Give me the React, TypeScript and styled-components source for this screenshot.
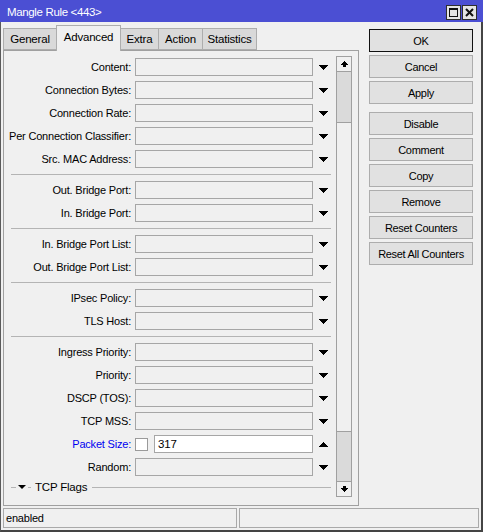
import React from 'react';
import styled, { createGlobalStyle } from 'styled-components';

const Global = createGlobalStyle`
  html, body { margin: 0; padding: 0; background: #f0f0f0; }
  body {
    font-family: "Liberation Sans", Arial, sans-serif;
    font-size: 11px;
    letter-spacing: -0.2px;
    color: #000;
  }
  * { box-sizing: border-box; }
`;

const Frame = styled.div`
  width: 483px;
  height: 532px;
  display: flex;
  flex-direction: column;
  background: #f0f0f0;
  overflow: hidden;
`;

const TitleBar = styled.div`
  height: 22px;
  flex: none;
  background: #4b4fd3;
  display: flex;
  align-items: center;
  padding: 1px 6px 0 7px;
  color: #fff;
  font-size: 11.5px;
  letter-spacing: -0.35px;
`;

const Title = styled.div`
  flex: 1;
  padding-top: 1px;
`;

const TitleButtons = styled.div`
  display: flex;
  gap: 1px;
  margin-top: 2px;
`;

const TitleBtn = styled.div`
  width: 15px;
  height: 15px;
  background: #e4e4e4;
  border: 1px solid #2e2e2e;
  display: flex;
  align-items: center;
  justify-content: center;
`;

const Client = styled.div`
  flex: 1;
  display: flex;
  flex-direction: column;
  border-left: 1px solid #5a5a5a;
  border-right: 2px solid #444;
  border-bottom: 2px solid #444;
  padding: 3px 2px 2px 2px;
`;

const MainRow = styled.div`
  display: flex;
  gap: 10px;
  height: 481px;
`;

const LeftCol = styled.div`
  width: 356px;
  display: flex;
  flex-direction: column;
`;

const TabStrip = styled.div`
  height: 25px;
  display: flex;
  align-items: flex-end;
  position: relative;
  z-index: 2;
`;

const Tab = styled.div<{ $w: number; $active?: boolean }>`
  width: ${p => p.$w}px;
  height: ${p => (p.$active ? 26 : 22)}px;
  margin-right: -1px;
  margin-bottom: ${p => (p.$active ? -1 : 0)}px;
  background: ${p => (p.$active ? '#f0f0f0' : '#d9d9d9')};
  border: 1px solid #adadad;
  border-bottom: ${p => (p.$active ? 'none' : '1px solid #adadad')};
  display: flex;
  align-items: center;
  justify-content: center;
  padding-bottom: ${p => (p.$active ? 3 : 0)}px;
  position: relative;
  z-index: ${p => (p.$active ? 2 : 1)};
  font-size: 11.5px;
`;

const Panel = styled.div`
  height: 456px;
  border: 1px solid #a0a0a0;
  background: #f0f0f0;
  display: flex;
  padding: 5px 6px 8px 0;
`;

const Viewport = styled.div`
  width: 332px;
  height: 441px;
  overflow: hidden;
  display: flex;
  flex-direction: column;
  padding-top: 2px;
`;

const Row = styled.div`
  display: grid;
  grid-template-columns: 131px 178px 20px;
  height: 18px;
  margin-bottom: 5px;
  flex: none;
  align-items: center;
`;

const Label = styled.div<{ $blue?: boolean }>`
  text-align: right;
  white-space: nowrap;
  padding-right: 4px;
  color: ${p => (p.$blue ? '#0000f0' : '#000')};
  line-height: 18px;
`;

const Field = styled.div<{ $white?: boolean }>`
  height: 18px;
  flex: 1;
  border: 1px solid #a6a6a6;
  background: ${p => (p.$white ? '#fff' : '#f0f0f0')};
  padding: 0 3px;
  line-height: 16px;
  font-size: 11.5px;
`;

const FieldGroup = styled.div`
  display: flex;
  align-items: center;
  height: 18px;
`;

const Check = styled.div`
  width: 13px;
  height: 13px;
  border: 1px solid #9a9a9a;
  background: #fff;
  margin-right: 6px;
  flex: none;
`;

const ArrowCell = styled.div`
  display: flex;
  justify-content: center;
  align-items: center;
  height: 18px;
`;

const Separator = styled.div`
  height: 1px;
  background: #b4b4b4;
  margin: 1px 5px 6px 7px;
  flex: none;
`;

const GroupHeader = styled.div`
  height: 12px;
  display: flex;
  align-items: center;
  margin: 0 5px 0 7px;
  flex: none;
`;

const Line = styled.div<{ $w?: number }>`
  height: 1px;
  background: #b4b4b4;
  ${p => (p.$w ? `width: ${p.$w}px; flex: none;` : 'flex: 1;')}
`;

const Spacer = styled.span<{ $w: number }>`
  width: ${p => p.$w}px;
  flex: none;
`;

const GroupTitle = styled.span`
  margin: 0 5px 0 4px;
  white-space: nowrap;
  font-size: 11.5px;
`;

const Scrollbar = styled.div`
  width: 16px;
  height: 441px;
  display: flex;
  flex-direction: column;
  flex: none;
`;

const ScrollBtn = styled.div`
  height: 16px;
  flex: none;
  border: 1px solid #a0a0a0;
  background: #f0f0f0;
  display: flex;
  align-items: center;
  justify-content: center;
`;

const Track = styled.div`
  flex: 1;
  background: #dadada;
  border-left: 1px solid #a0a0a0;
  border-right: 1px solid #a0a0a0;
  display: flex;
  flex-direction: column;
  margin-bottom: -1px;
`;

const Thumb = styled.div`
  background: #f0f0f0;
  border: 1px solid #a0a0a0;
  margin: 0 -1px;
  flex: none;
`;

const RightCol = styled.div`
  width: 104px;
  margin-top: 4px;
  display: flex;
  flex-direction: column;
`;

const Button = styled.div<{ $default?: boolean; $gapAfter?: boolean }>`
  height: 23px;
  margin-bottom: ${p => (p.$gapAfter ? 8 : 3)}px;
  background: #e1e1e1;
  border: 1px solid ${p => (p.$default ? '#111' : '#adadad')};
  display: flex;
  align-items: center;
  justify-content: center;
  white-space: nowrap;
  font-size: 11px;
  letter-spacing: -0.3px;
`;

const StatusBar = styled.div`
  margin-top: 2px;
  height: 20px;
  display: flex;
  gap: 2px;
`;

const StatusCell = styled.div<{ $w?: number }>`
  ${p => (p.$w ? `width: ${p.$w}px;` : 'flex: 1;')}
  height: 20px;
  border: 1px solid #a9a9a9;
  padding: 0 2px;
  line-height: 18px;
  font-size: 11px;
`;

const DownTri = () => (
  <svg width="9" height="5" viewBox="0 0 9 5" shapeRendering="crispEdges">
    <path d="M0 0h9v1h-1v1h-1v1h-1v1h-1v1h-1v-1h-1v-1h-1v-1h-1v-1h-1z" fill="#000" />
  </svg>
);

const UpTri = () => (
  <svg width="9" height="5" viewBox="0 0 9 5" shapeRendering="crispEdges">
    <path d="M0 5h9v-1h-1v-1h-1v-1h-1v-1h-1v-1h-1v1h-1v1h-1v1h-1v1h-1z" fill="#000" />
  </svg>
);

const SmallDownTri = () => (
  <svg width="8" height="4" viewBox="0 0 8 4">
    <path d="M0 0H8L4 4Z" fill="#000" />
  </svg>
);

const ScrollUpIcon = () => (
  <svg width="7" height="6" viewBox="0 0 7 6" shapeRendering="crispEdges">
    <path d="M3 0h1v1h1v1h1v1h1v1h-2v2h-3v-2h-2v-1h1v-1h1v-1h1z" fill="#000" />
  </svg>
);

const ScrollDownIcon = () => (
  <svg width="7" height="6" viewBox="0 0 7 6" shapeRendering="crispEdges">
    <path d="M2 0h3v2h2v1h-1v1h-1v1h-1v1h-1v-1h-1v-1h-1v-1h-1v-1h2z" fill="#000" />
  </svg>
);

const MaxIcon = () => (
  <svg width="9" height="9" viewBox="0 0 9 9" shapeRendering="crispEdges">
    <path d="M0 0h9v9h-9z M1 2v6h7v-6z" fill="#111" fillRule="evenodd" />
  </svg>
);

const CloseIcon = () => (
  <svg width="9" height="9" viewBox="0 0 9 9">
    <path d="M1 1L8 8M8 1L1 8" stroke="#111" strokeWidth="2" />
  </svg>
);

type FieldDef = { label: string; special?: 'packet' };

const sections: FieldDef[][] = [
  [
    { label: 'Content' },
    { label: 'Connection Bytes' },
    { label: 'Connection Rate' },
    { label: 'Per Connection Classifier' },
    { label: 'Src. MAC Address' },
  ],
  [{ label: 'Out. Bridge Port' }, { label: 'In. Bridge Port' }],
  [{ label: 'In. Bridge Port List' }, { label: 'Out. Bridge Port List' }],
  [{ label: 'IPsec Policy' }, { label: 'TLS Host' }],
  [
    { label: 'Ingress Priority' },
    { label: 'Priority' },
    { label: 'DSCP (TOS)' },
    { label: 'TCP MSS' },
    { label: 'Packet Size', special: 'packet' },
    { label: 'Random' },
  ],
];

const tabs = [
  { name: 'General', w: 54 },
  { name: 'Advanced', w: 65, active: true },
  { name: 'Extra', w: 39 },
  { name: 'Action', w: 45 },
  { name: 'Statistics', w: 55 },
];

const buttons = [
  { t: 'OK', def: true },
  { t: 'Cancel' },
  { t: 'Apply', gap: true },
  { t: 'Disable' },
  { t: 'Comment' },
  { t: 'Copy' },
  { t: 'Remove' },
  { t: 'Reset Counters' },
  { t: 'Reset All Counters' },
];

const FormRow = ({ f }: { f: FieldDef }) => {
  if (f.special === 'packet') {
    return (
      <Row>
        <Label $blue>{f.label}:</Label>
        <FieldGroup>
          <Check />
          <Field $white>317</Field>
        </FieldGroup>
        <ArrowCell>
          <UpTri />
        </ArrowCell>
      </Row>
    );
  }
  return (
    <Row>
      <Label>{f.label}:</Label>
      <Field />
      <ArrowCell>
        <DownTri />
      </ArrowCell>
    </Row>
  );
};

export default function App() {
  return (
    <>
      <Global />
      <Frame>
        <TitleBar>
          <Title>Mangle Rule &lt;443&gt;</Title>
          <TitleButtons>
            <TitleBtn>
              <MaxIcon />
            </TitleBtn>
            <TitleBtn>
              <CloseIcon />
            </TitleBtn>
          </TitleButtons>
        </TitleBar>
        <Client>
          <MainRow>
            <LeftCol>
              <TabStrip>
                {tabs.map(t => (
                  <Tab key={t.name} $w={t.w} $active={t.active}>
                    {t.name}
                  </Tab>
                ))}
              </TabStrip>
              <Panel>
                <Viewport>
                  {sections.map((s, i) => (
                    <React.Fragment key={i}>
                      {i > 0 && <Separator />}
                      {s.map(f => (
                        <FormRow key={f.label} f={f} />
                      ))}
                    </React.Fragment>
                  ))}
                  <GroupHeader>
                    <Line $w={5} />
                    <Spacer $w={2} />
                    <SmallDownTri />
                    <Spacer $w={2} />
                    <Line $w={3} />
                    <GroupTitle>TCP Flags</GroupTitle>
                    <Line />
                  </GroupHeader>
                </Viewport>
                <Scrollbar>
                  <ScrollBtn>
                    <ScrollUpIcon />
                  </ScrollBtn>
                  <Track>
                    <Thumb style={{ marginTop: 50, height: 310 }} />
                  </Track>
                  <ScrollBtn>
                    <ScrollDownIcon />
                  </ScrollBtn>
                </Scrollbar>
              </Panel>
            </LeftCol>
            <RightCol>
              {buttons.map(b => (
                <Button key={b.t} $default={b.def} $gapAfter={b.gap}>
                  {b.t}
                </Button>
              ))}
            </RightCol>
          </MainRow>
          <StatusBar>
            <StatusCell $w={234}>enabled</StatusCell>
            <StatusCell />
          </StatusBar>
        </Client>
      </Frame>
    </>
  );
}
